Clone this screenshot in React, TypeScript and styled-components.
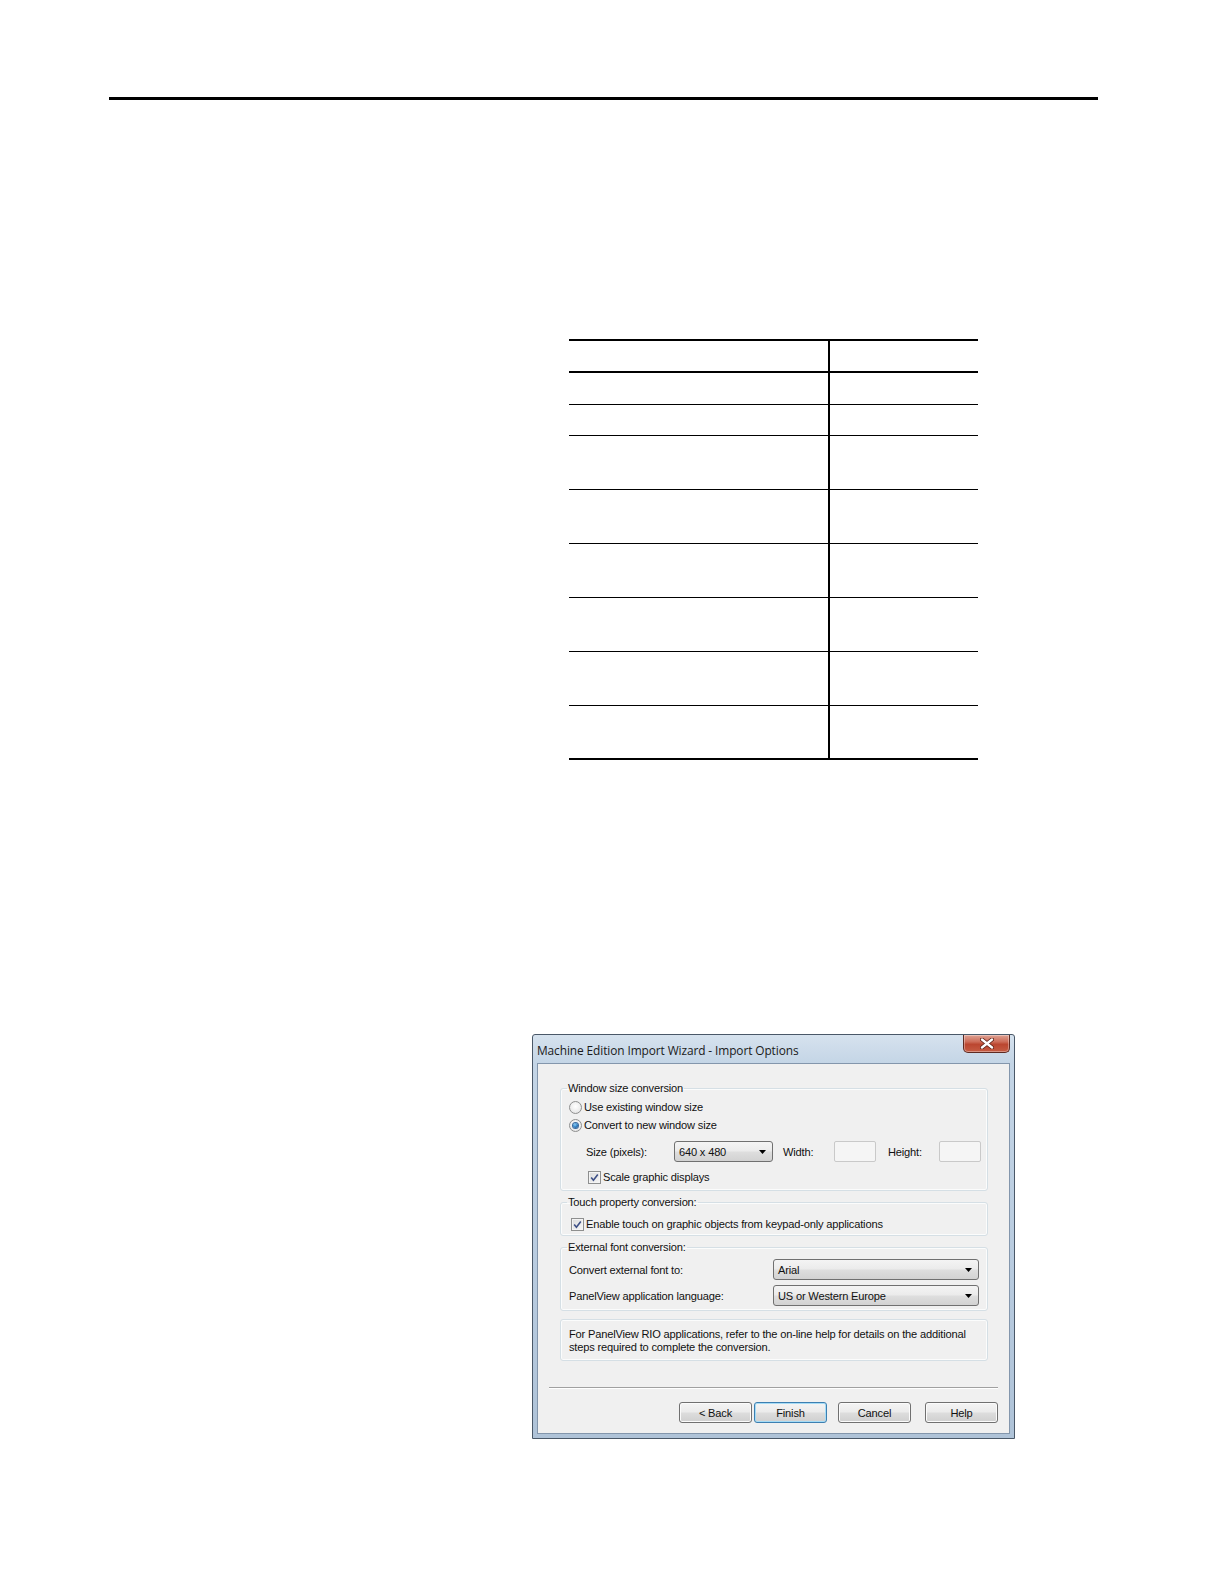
import styled, { createGlobalStyle, css } from 'styled-components';

const GlobalStyle = createGlobalStyle`
  html, body {
    margin: 0;
    padding: 0;
    background: #fff;
  }
  body {
    font-family: "Liberation Sans", Arial, sans-serif;
  }
`;

const Page = styled.div`
  width: 1224px;
  min-height: 1584px;
  display: flex;
  flex-direction: column;
  align-items: flex-start;
`;

const HeaderRule = styled.div`
  margin: 97px 0 0 109px;
  width: 989px;
  height: 3px;
  background: #000;
`;

// ---------- empty ruled table ----------

const Table = styled.div`
  margin: 239px 0 0 569px;
  width: 409px;
  border-top: 2px solid #000;
  border-bottom: 2px solid #000;
`;

const Row = styled.div<{ $h: number; $thick?: boolean }>`
  box-sizing: border-box;
  display: grid;
  grid-template-columns: 261px 148px;
  height: ${(p) => p.$h}px;
  border-bottom: ${(p) => (p.$thick ? 2 : 1.5)}px solid #000;
  &:last-child {
    border-bottom: none;
  }
`;

const Cell = styled.div<{ $divider?: boolean }>`
  ${(p) =>
    p.$divider &&
    css`
      border-right: 2px solid #000;
    `}
`;

// ---------- dialog ----------

const Dialog = styled.div`
  margin: 274px 0 0 532px;
  width: 483px;
  height: 405px;
  box-sizing: border-box;
  border: 1px solid #4a5868;
  border-radius: 3px 3px 0 0;
  background: linear-gradient(180deg, #d6e2ee 0%, #c4d5e6 7%, #b8cbdf 60%, #afc3d8 100%);
  display: flex;
  flex-direction: column;
  padding: 0 4px 4px;
  font-size: 11.1px;
  letter-spacing: -0.18px;
  color: #111;
`;

const TitleBar = styled.div`
  height: 28px;
  display: flex;
  justify-content: space-between;
  align-items: flex-start;
`;

const TitleText = styled.div`
  font-family: "Open Sans", "Liberation Sans", sans-serif;
  font-size: 11.9px;
  letter-spacing: -0.1px;
  color: #1a1a1a;
  margin-top: 7px;
`;

const CloseButton = styled.div`
  width: 47px;
  height: 18px;
  box-sizing: border-box;
  border: 1px solid #5e2a22;
  border-top: none;
  border-radius: 0 0 5px 5px;
  background: linear-gradient(180deg, #dfa294 0%, #cd6c58 40%, #bb4630 55%, #c65c43 100%);
  box-shadow: inset 0 0 0 1px rgba(255, 255, 255, 0.35);
  display: flex;
  align-items: center;
  justify-content: center;
`;

const Client = styled.div`
  flex: 1;
  border: 1px solid #8396ac;
  background: #f0f0f0;
  padding: 18px 21px 0 22px;
  display: flex;
  flex-direction: column;
`;

const Group = styled.fieldset<{ $gap?: number }>`
  margin: ${(p) => p.$gap ?? 0}px 0 0;
  padding: 0;
  min-width: 0;
  border: 1px solid #d5dfe5;
  border-radius: 3px;
  box-shadow: inset 0 0 0 1px #fbfcfc;
`;

const Legend = styled.legend`
  margin-left: 6px;
  padding: 0 1px;
  line-height: 13px;
`;

const GroupBody = styled.div<{ $pt: number; $pb: number }>`
  padding: ${(p) => p.$pt}px 0 ${(p) => p.$pb}px 8px;
  display: flex;
  flex-direction: column;
`;

const NoteBox = styled.div`
  margin-top: 8px;
  border: 1px solid #d5dfe5;
  border-radius: 3px;
  box-shadow: inset 0 0 0 1px #fbfcfc;
  padding: 8px 0 6px 8px;
  line-height: 13px;
`;

const OptionRow = styled.div<{ $indent?: number; $mt?: number }>`
  height: 18px;
  display: flex;
  align-items: center;
  margin-left: ${(p) => p.$indent ?? 0}px;
  margin-top: ${(p) => p.$mt ?? 0}px;
`;

const FieldRow = styled.div<{ $mt?: number; $indent?: number }>`
  height: 21px;
  display: flex;
  align-items: center;
  margin-top: ${(p) => p.$mt ?? 0}px;
  margin-left: ${(p) => p.$indent ?? 0}px;
`;

const Label = styled.span<{ $w?: number; $ml?: number }>`
  ${(p) =>
    p.$w !== undefined &&
    css`
      width: ${p.$w}px;
      flex: none;
    `}
  margin-left: ${(p) => p.$ml ?? 0}px;
  white-space: nowrap;
`;

const RadioDot = styled.span<{ $on?: boolean }>`
  width: 13px;
  height: 13px;
  box-sizing: border-box;
  border-radius: 50%;
  border: 1px solid #8e8f8f;
  background: radial-gradient(circle at 50% 40%, #ffffff 0%, #e9e9e9 70%, #d5d5d5 100%);
  margin-right: 2px;
  display: flex;
  align-items: center;
  justify-content: center;
  &::after {
    content: '';
    display: ${(p) => (p.$on ? 'block' : 'none')};
    width: 5px;
    height: 5px;
    border-radius: 50%;
    background: radial-gradient(circle at 40% 35%, #8fd0f6 0%, #2e7fc4 50%, #173f75 100%);
    box-shadow: 0 0 0 1px #3a6a9e;
  }
`;

const CheckBox = styled.span`
  width: 13px;
  height: 13px;
  box-sizing: border-box;
  border: 1px solid #8e8f8f;
  background: linear-gradient(135deg, #dcdcdc 0%, #f6f6f6 100%);
  box-shadow: inset 0 0 0 1px #f4f4f4;
  margin-right: 2px;
  display: flex;
  align-items: center;
  justify-content: center;
`;

const Combo = styled.div<{ $w: number }>`
  width: ${(p) => p.$w}px;
  height: 21px;
  box-sizing: border-box;
  border: 1px solid #707070;
  border-radius: 3px;
  background: linear-gradient(180deg, #f4f4f4 0%, #ebebeb 48%, #dedede 52%, #d2d2d2 100%);
  display: flex;
  align-items: center;
  justify-content: space-between;
  padding: 0 6px 0 4px;
  flex: none;
`;

const TextBox = styled.div`
  width: 42px;
  height: 21px;
  box-sizing: border-box;
  border: 1px solid #c9c9c9;
  border-radius: 2px;
  background: #f5f5f5;
  flex: none;
`;

const Separator = styled.div`
  margin: 26px -10px 0 -11px;
  border-top: 1px solid #a0a0a0;
  border-bottom: 1px solid #ffffff;
`;

const ButtonRow = styled.div`
  margin: 13px -10px 0 0;
  display: flex;
  justify-content: flex-end;
`;

const Button = styled.div<{ $focused?: boolean; $gap?: number }>`
  width: 73px;
  height: 21px;
  box-sizing: border-box;
  margin-left: ${(p) => p.$gap ?? 0}px;
  border: 1px solid ${(p) => (p.$focused ? '#3c7fb1' : '#707070')};
  border-radius: 3px;
  background: linear-gradient(180deg, #f4f4f4 0%, #ebebeb 48%, #dddddd 52%, #cfcfcf 100%);
  box-shadow: ${(p) => (p.$focused ? 'inset 0 0 0 1px #a6dcf6' : 'inset 0 0 0 1px #fbfbfb')};
  display: flex;
  align-items: center;
  justify-content: center;
`;

function Arrow() {
  return (
    <svg width="7" height="4" viewBox="0 0 7 4">
      <path d="M0 0h7L3.5 4z" fill="#000" />
    </svg>
  );
}

function Tick() {
  return (
    <svg width="9" height="9" viewBox="0 0 9 9">
      <path d="M1.2 4.6 L3.4 7.2 L7.8 1.4" fill="none" stroke="#3d4f86" strokeWidth="1.6" />
    </svg>
  );
}

function CloseGlyph() {
  return (
    <svg width="14" height="11" viewBox="0 0 14 11">
      <path d="M2 1.5 L12 9.5 M12 1.5 L2 9.5" stroke="#5a1e14" strokeWidth="4" strokeLinecap="round" />
      <path d="M2 1.5 L12 9.5 M12 1.5 L2 9.5" stroke="#ffffff" strokeWidth="2.4" strokeLinecap="round" />
    </svg>
  );
}

const rows = [
  { h: 32, thick: true },
  { h: 32 },
  { h: 31 },
  { h: 54 },
  { h: 54 },
  { h: 54 },
  { h: 54 },
  { h: 54 },
  { h: 52 },
];

export default function App() {
  return (
    <Page>
      <GlobalStyle />
      <HeaderRule />

      <Table>
        {rows.map((r, i) => (
          <Row key={i} $h={r.h} $thick={r.thick}>
            <Cell $divider />
            <Cell />
          </Row>
        ))}
      </Table>

      <Dialog>
        <TitleBar>
          <TitleText>Machine Edition Import Wizard - Import Options</TitleText>
          <CloseButton>
            <CloseGlyph />
          </CloseButton>
        </TitleBar>

        <Client>
          <Group>
            <Legend>Window size conversion</Legend>
            <GroupBody $pt={3} $pb={4}>
              <OptionRow>
                <RadioDot />
                <Label>Use existing window size</Label>
              </OptionRow>
              <OptionRow>
                <RadioDot $on />
                <Label>Convert to new window size</Label>
              </OptionRow>
              <FieldRow $mt={7} $indent={17}>
                <Label $w={88}>Size (pixels):</Label>
                <Combo $w={99}>
                  <span>640 x 480</span>
                  <Arrow />
                </Combo>
                <Label $w={51} $ml={10}>
                  Width:
                </Label>
                <TextBox />
                <Label $w={51} $ml={12}>
                  Height:
                </Label>
                <TextBox />
              </FieldRow>
              <OptionRow $indent={19} $mt={6}>
                <CheckBox>
                  <Tick />
                </CheckBox>
                <Label>Scale graphic displays</Label>
              </OptionRow>
            </GroupBody>
          </Group>

          <Group $gap={5}>
            <Legend>Touch property conversion:</Legend>
            <GroupBody $pt={6} $pb={2}>
              <OptionRow $indent={2}>
                <CheckBox>
                  <Tick />
                </CheckBox>
                <Label>Enable touch on graphic objects from keypad-only applications</Label>
              </OptionRow>
            </GroupBody>
          </Group>

          <Group $gap={5}>
            <Legend>External font conversion:</Legend>
            <GroupBody $pt={5} $pb={4}>
              <FieldRow>
                <Label $w={204}>Convert external font to:</Label>
                <Combo $w={206}>
                  <span>Arial</span>
                  <Arrow />
                </Combo>
              </FieldRow>
              <FieldRow $mt={5}>
                <Label $w={204}>PanelView application language:</Label>
                <Combo $w={206}>
                  <span>US or Western Europe</span>
                  <Arrow />
                </Combo>
              </FieldRow>
            </GroupBody>
          </Group>

          <NoteBox>
            For PanelView RIO applications, refer to the on-line help for details on the additional
            <br />
            steps required to complete the conversion.
          </NoteBox>

          <Separator />

          <ButtonRow>
            <Button>&lt; Back</Button>
            <Button $focused $gap={2}>
              Finish
            </Button>
            <Button $gap={11}>Cancel</Button>
            <Button $gap={14}>Help</Button>
          </ButtonRow>
        </Client>
      </Dialog>
    </Page>
  );
}
